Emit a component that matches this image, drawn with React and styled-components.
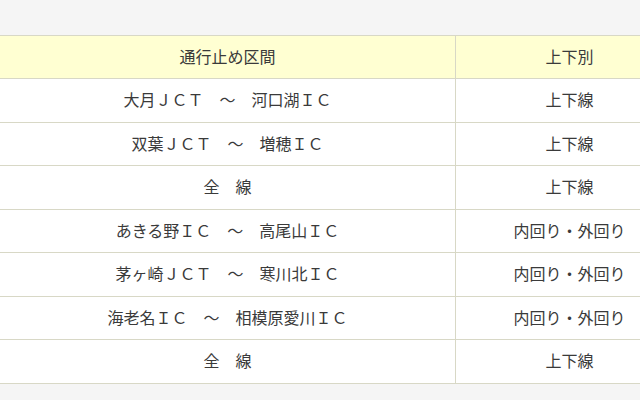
import React from 'react';
import styled, { createGlobalStyle } from 'styled-components';

const ROWS = [
	{ section: '大月ＪＣＴ　～　河口湖ＩＣ', direction: '上下線' },
	{ section: '双葉ＪＣＴ　～　増穂ＩＣ', direction: '上下線' },
	{ section: '全　線', direction: '上下線' },
	{ section: 'あきる野ＩＣ　～　高尾山ＩＣ', direction: '内回り・外回り' },
	{ section: '茅ヶ崎ＪＣＴ　～　寒川北ＩＣ', direction: '内回り・外回り' },
	{ section: '海老名ＩＣ　～　相模原愛川ＩＣ', direction: '内回り・外回り' },
	{ section: '全　線', direction: '上下線' },
];

const GlobalStyle = createGlobalStyle`
	html, body {
		margin: 0;
		padding: 0;
		background: #f5f5f5;
		overflow: hidden;
	}
	body {
		font-family: "Noto Sans CJK JP", "Noto Sans", sans-serif;
		color: #3a3a3a;
	}
`;

const Page = styled.div`
	width: 640px;
	height: 400px;
	padding-top: 35px;
	box-sizing: border-box;
	overflow: hidden;
`;

const Table = styled.table`
	border-collapse: collapse;
	width: 684px;
	margin-left: -1px;
	background: #fff;
	table-layout: fixed;
`;

const HeadCell = styled.th`
	height: 43px;
	padding: 0 0 2px;
	box-sizing: border-box;
	background: #ffffd2;
	border: 1px solid #d8d8c6;
	font-weight: normal;
	font-size: 16px;
	text-align: center;
	width: ${props => props.width};
`;

const Cell = styled.td`
	height: 43.5px;
	padding: 0 0 2px;
	box-sizing: border-box;
	border: 1px solid #d8d8c6;
	font-size: 16px;
	text-align: center;
	white-space: nowrap;
`;

const App = () => (
	<>
		<GlobalStyle />
		<Page>
			<Table>
				<thead>
					<tr>
						<HeadCell width="456px">通行止め区間</HeadCell>
						<HeadCell width="228px">上下別</HeadCell>
					</tr>
				</thead>
				<tbody>
					{ROWS.map((row, i) => (
						<tr key={`row-${i}`}>
							<Cell>{row.section}</Cell>
							<Cell>{row.direction}</Cell>
						</tr>
					))}
				</tbody>
			</Table>
		</Page>
	</>
);

export default App;
